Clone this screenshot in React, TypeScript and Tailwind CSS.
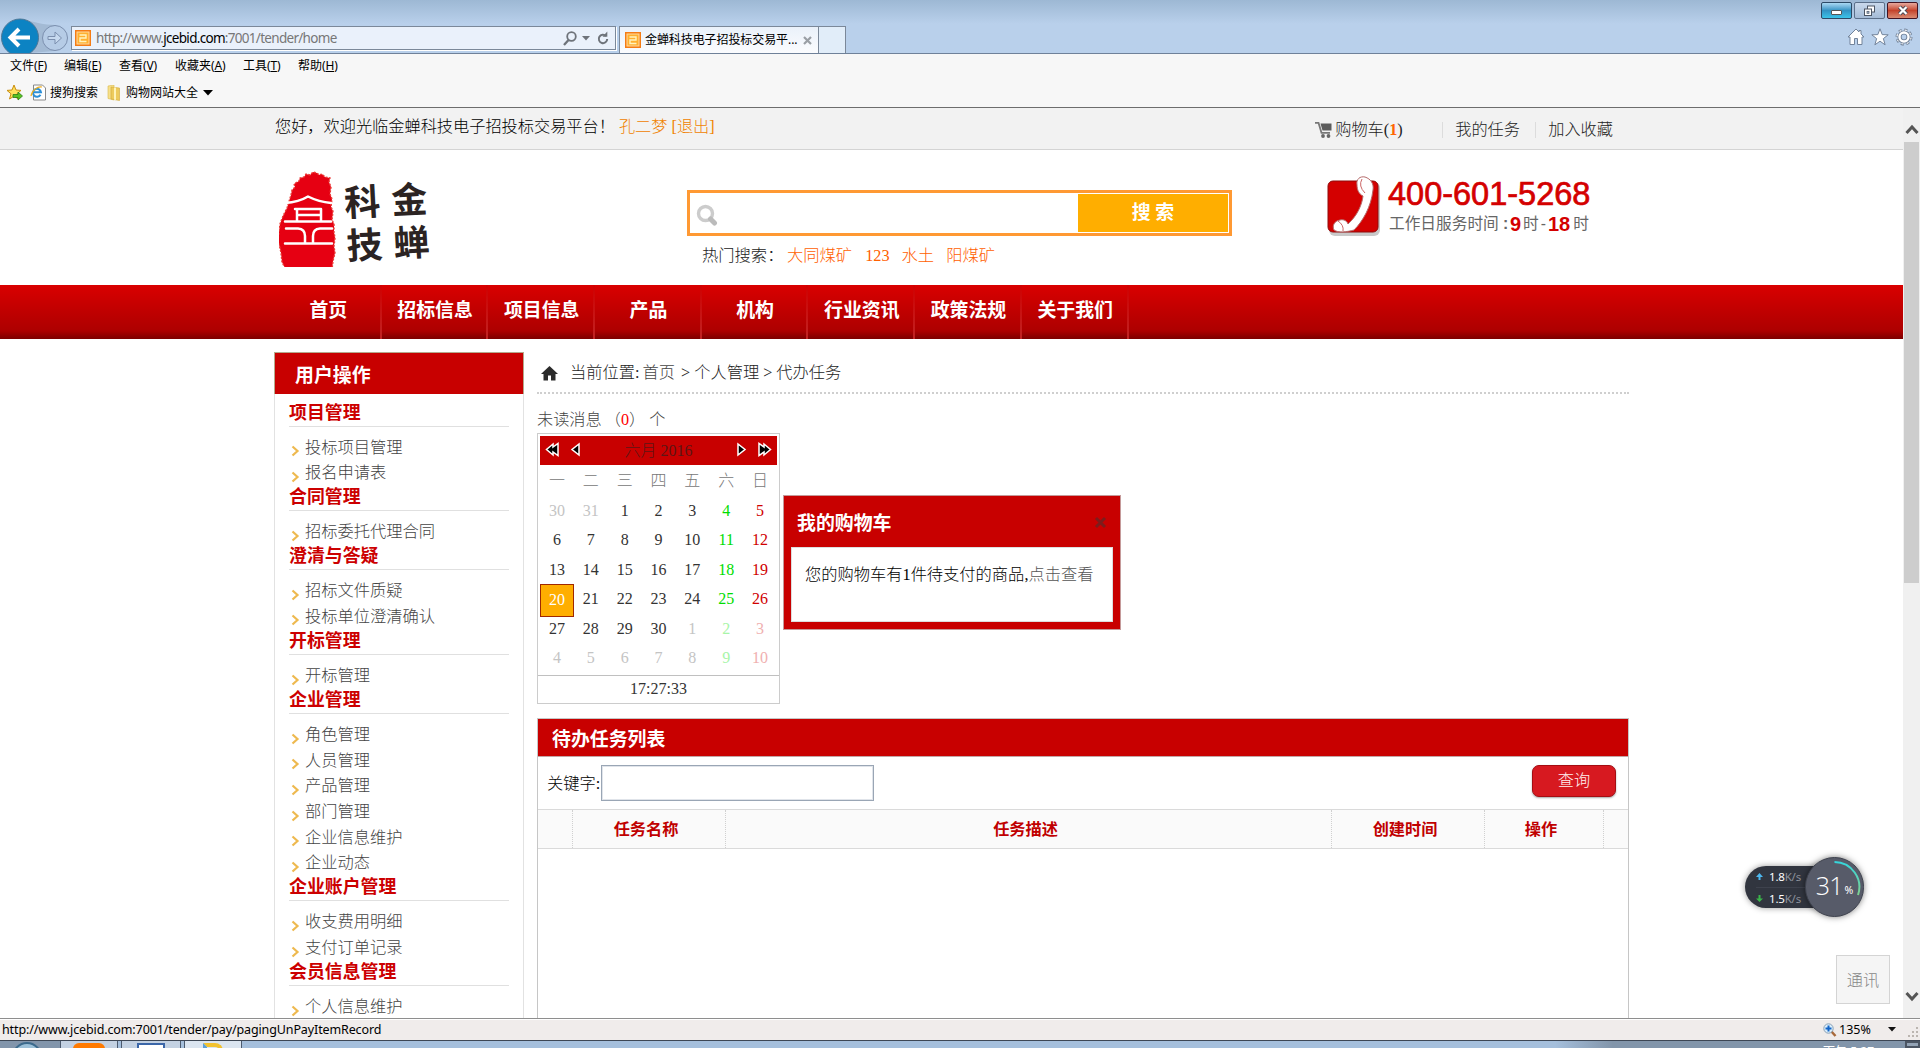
import type { ReactNode } from "react";

const SERIF = "font-['Liberation_Serif','Noto_Sans_CJK_SC',serif]";
const SANS = "font-['Noto_Sans','Noto_Sans_CJK_SC',sans-serif]";

function Favicon() {
  return (
    <svg width="16" height="16" viewBox="0 0 16 16" className="shrink-0">
      <rect width="16" height="16" fill="#f57c14" />
      <rect x="2" y="2" width="12" height="12" fill="#ffb030" stroke="#ffd9a0" strokeWidth="1" />
      <path d="M4.500 5h6.500v3H5v3.500h6.500" fill="none" stroke="#fff3c0" strokeWidth="1.400" />
    </svg>
  );
}

function WindowButtons() {
  return (
    <div className="flex gap-[2px] pr-[2px] pt-[2px]">
      <div className="flex h-[17px] w-[31px] items-end justify-center rounded-[2px] border border-[#2c4a66] bg-linear-to-b from-[#a9d8f3] via-[#3293c4] via-50% to-[#3bc3e8] pb-[3px]">
        <div className="h-[5px] w-[11px] rounded-[1px] border border-[#555] bg-white" />
      </div>
      <div className="flex h-[17px] w-[31px] items-center justify-center rounded-[2px] border border-[#5b6f89] bg-linear-to-b from-[#c9d9ec] to-[#a4bbd6]">
        <svg width="13" height="12" viewBox="0 0 13 12">
          <rect x="4.5" y="1" width="7" height="6" fill="#fff" stroke="#4c5563" />
          <rect x="1.5" y="4" width="7" height="6.5" fill="#fff" stroke="#4c5563" />
          <rect x="4" y="6.3" width="2" height="2" fill="#a4bbd6" stroke="#4c5563" strokeWidth=".7" />
        </svg>
      </div>
      <div className="flex h-[17px] w-[31px] items-center justify-center rounded-[2px] border border-[#431422] bg-linear-to-b from-[#e6a79c] via-[#c4432c] via-50% to-[#d98a72]">
        <svg width="12" height="11" viewBox="0 0 12 11">
          <path d="M2.5 2l7 7M9.5 2l-7 7" stroke="#4a4a55" strokeWidth="4" />
          <path d="M2.5 2l7 7M9.5 2l-7 7" stroke="#fff" strokeWidth="2.2" />
        </svg>
      </div>
    </div>
  );
}

function BrowserChrome() {
  return (
    <div className={`relative flex h-[54px] shrink-0 border-b border-[#6f8199] bg-linear-to-b from-[#9db8d4] to-[#b9d0eb] to-[45%] ${SANS}`}>
      <svg width="71" height="53" viewBox="0 0 71 53" className="shrink-0">
        <path d="M20 19 C36 22 44 25 55 25 L55 51 L30 53Z" fill="#a3bad4" />
        <circle cx="20" cy="37.500" r="18.500" fill="#0c83c3" stroke="#4e7796" />
        <path d="M11 37.500h19M19 29l-8.500 8.500L19 46" fill="none" stroke="#fff" strokeWidth="4" />
        <circle cx="55" cy="38" r="12.500" fill="#b6cce6" stroke="#7b8fae" />
        <path d="M48 36.500h7v-4.500l6.500 6-6.500 6v-4.500h-7z" fill="#c6d9ef" stroke="#7b8fae" />
      </svg>
      <div className="mt-[26px] flex h-[24px] w-[545px] shrink-0 items-center border border-[#7b8899] bg-[#eaf1fb] pl-[3px] pr-[6px] shadow-[1px_1px_0_#fff]">
        <Favicon />
        <div className="ml-[5px] whitespace-nowrap text-[13.500px] leading-[20px] tracking-[-0.700px] text-[#777]">
          http://www.<span className="text-black">jcebid.com</span>:7001/tender/home
        </div>
        <div className="ml-auto flex items-center">
          <svg width="14" height="15" viewBox="0 0 14 15">
            <circle cx="8.500" cy="5.500" r="4.300" fill="none" stroke="#6e737a" strokeWidth="1.800" />
            <path d="M5.500 9L1 14" stroke="#6e737a" strokeWidth="2.300" />
          </svg>
          <svg width="8" height="5" viewBox="0 0 8 5" className="ml-[5px]"><path d="M0 0h8L4 4.500z" fill="#6e737a" /></svg>
          <svg width="12" height="14" viewBox="0 0 12 14" className="ml-[7px]">
            <path d="M9 5A4.200 4.200 0 1 0 10.200 8" fill="none" stroke="#6e737a" strokeWidth="2" />
            <path d="M5.500 5.800h4.800V.5z" fill="#6e737a" />
          </svg>
        </div>
      </div>
      <div className="ml-[3px] mt-[26px] flex h-[27px] w-[200px] shrink-0 items-center border border-b-0 border-[#7b8899] bg-linear-to-b from-[#eaf1fa] to-[#fbfcfe] pl-[5px]">
        <Favicon />
        <span className="ml-[4px] whitespace-nowrap text-[12px] tracking-[-0.080px] text-black">金蝉科技电子招投标交易平...</span>
        <svg width="9" height="9" viewBox="0 0 9 9" className="ml-auto mr-[6px] shrink-0"><path d="M1 1l7 7M8 1L1 8" stroke="#9a9fa5" strokeWidth="2.200" /></svg>
      </div>
      <div className="mt-[26px] h-[27px] w-[27px] shrink-0 border border-b-0 border-l-0 border-[#7b8899] bg-[#e1edf9]" />
      <div className="ml-auto flex flex-col items-end">
        <WindowButtons />
        <div className="mt-[9px] flex gap-[6px] pr-[7px]">
          <svg width="18" height="18" viewBox="0 0 18 18"><path d="M9 1L1 9h2v7.500h4.500v-6h3v6H15V9h2l-3-3V2.500h-2V4z" fill="#fff" stroke="#72839a" /></svg>
          <svg width="18" height="18" viewBox="0 0 18 18"><path d="M9 .8l2.200 5.800 6 .2-4.800 3.800 1.700 6.200L9 13.200l-5.100 3.600 1.700-6.200L.8 6.800l6-.2z" fill="#fff" stroke="#72839a" /></svg>
          <svg width="18" height="18" viewBox="0 0 18 18">
            <circle cx="9" cy="9" r="6.800" fill="none" stroke="#72839a" strokeWidth="3.400" strokeDasharray="3 2.340" />
            <circle cx="9" cy="9" r="6.600" fill="none" stroke="#fff" strokeWidth="2" strokeDasharray="2 3.180" strokeDashoffset="-.5" />
            <circle cx="9" cy="9" r="4.500" fill="none" stroke="#72839a" strokeWidth="4.200" />
            <circle cx="9" cy="9" r="4.500" fill="none" stroke="#fff" strokeWidth="2.400" />
          </svg>
        </div>
      </div>
    </div>
  );
}

function MenuItem({ label, hot, width }: { label: string; hot: string; width: string }) {
  return <div className={`${width} whitespace-nowrap`}>{label}<span className="tracking-[-0.200px]">(<span className="underline">{hot}</span>)</span></div>;
}

function MenuBars() {
  return (
    <div className={`h-[54px] shrink-0 border-b border-[#6d6d6d] bg-[#f7f7f7] text-[12px] text-black ${SANS}`}>
      <div className="flex h-[24px] items-center pl-[10px]">
        <MenuItem label="文件" hot="F" width="w-[54px]" />
        <MenuItem label="编辑" hot="E" width="w-[55px]" />
        <MenuItem label="查看" hot="V" width="w-[56px]" />
        <MenuItem label="收藏夹" hot="A" width="w-[68px]" />
        <MenuItem label="工具" hot="T" width="w-[55px]" />
        <MenuItem label="帮助" hot="H" width="w-[60px]" />
      </div>
      <div className="flex h-[29px] items-center pl-[6px]">
        <svg width="17" height="17" viewBox="0 0 17 17">
          <path d="M8 1l2 5 5 .4-4 3.400 1.500 5.200L8 12.200 3.500 15 5 9.800 1 6.400 6 6z" fill="#ffe15c" stroke="#c98e10" />
          <path d="M7 10.500h5V8l4.500 4-4.500 4v-2.500H7z" fill="#58c322" stroke="#2b7d14" strokeWidth=".8" />
        </svg>
        <svg width="17" height="17" viewBox="0 0 17 17" className="ml-[7px]">
          <path d="M3.500 1h9l3 3v12h-12z" fill="#fff" stroke="#8a8a8a" />
          <path d="M10.500 10.800A4 4 0 1 1 11 8.300H3.500" fill="none" stroke="#2c8fd8" strokeWidth="2" />
          <path d="M1 12C2 6 8 2 12 3" fill="none" stroke="#f0b020" strokeWidth="1.200" />
        </svg>
        <span className="ml-[3px]">搜狗搜索</span>
        <svg width="14" height="16" viewBox="0 0 14 16" className="ml-[9px]">
          <path d="M1 1l6-1v15l-6-1.500z" fill="#f7e08a" stroke="#d9b84a" strokeWidth=".6" />
          <path d="M4 2l8.500 1v12.500L4 14z" fill="#edcb5c" stroke="#d0a838" strokeWidth=".6" />
          <path d="M7 2.400l2 .2v12.500l-2-.4z" fill="#fff3b8" />
        </svg>
        <span className="ml-[5px]">购物网站大全</span>
        <svg width="10" height="6" viewBox="0 0 10 6" className="ml-[5px]"><path d="M0 0h10L5 5.500z" fill="#000" /></svg>
      </div>
    </div>
  );
}

function TopStrip() {
  return (
    <div className="h-[42px] border-b border-[#d4d4d4] bg-[#f2f2f2]">
      <div className="mx-auto flex w-[1355px] text-[16.200px] leading-[24px] text-[#222]">
        <div className="mt-[7px] whitespace-nowrap pl-px text-black">
          您好，欢迎光临金蝉科技电子招投标交易平台！<span className="ml-[4px] text-[#f08200]">孔二梦 <span className="font-normal">[</span>退出<span className="font-normal">]</span></span>
        </div>
        <div className="ml-auto mt-[10px] flex items-center pr-[16px]">
          <svg width="17" height="16" viewBox="0 0 17 16" className="mr-[3px]">
            <path d="M0 .8h3.500l3 10H15" fill="none" stroke="#777" strokeWidth="1.800" />
            <path d="M5.500 1.500H16.500v7H7.500z" fill="#5c5c5c" />
            <circle cx="8" cy="14" r="1.900" fill="#666" /><circle cx="13.500" cy="14" r="1.900" fill="#666" />
          </svg>
          <div className="w-[107px]">购物车<span className="font-normal">(<span className="font-bold text-[#ff6600]">1</span>)</span></div>
          <div className="h-[16px] w-px bg-[#dcdcdc]" />
          <div className="w-[92px] pl-[12px]">我的任务</div>
          <div className="h-[16px] w-px bg-[#dcdcdc]" />
          <div className="pl-[12px]">加入收藏</div>
        </div>
      </div>
    </div>
  );
}

function Logo() {
  return (
    <div className="flex">
      <svg width="60" height="96" viewBox="0 0 60 96">
        <path d="M12 24l1-5 3-3-1-3 5-3 1-3 4-1 2-3 4 1 3-3 4 1 2 2 3-1 3 3 5 1-1 4 2 5-1 7 2 5-1 8 2 4-1 9 2 4 0 8 1 6-1 8 1 7-2 8-1 9-5 3-5 1-4 2-5-1-4 2-5-2-5 1-5-3-5-1-4-4-3-6-1-9-1-5-2-7 1-9 1-8 3-8 4-8z" fill="#e60012" stroke="#ec3a35" strokeWidth="1.400" strokeDasharray="2 1.500" />
        <g fill="none" stroke="#fff" strokeWidth="2.500" strokeLinecap="round" strokeLinejoin="round">
          <path d="M6 32Q20 31 29 25.500Q40 31 52 32" />
          <path d="M16 38h25M20 44h22M18 38v12M42 38v12M6 50.500h46" />
          <path d="M7 57.500h12Q26 58 26 65v7M34 72v-7Q34 58 41 57.500h12M6 72.500h47" />
        </g>
      </svg>
      <div className="ml-[1px] mt-[11px] grid w-[94px] -rotate-3 grid-cols-[47px_47px] text-center text-[36px] font-bold leading-[40px] text-[#2b2322]">
        <span>科</span><span>金</span><span>技</span><span>蝉</span>
      </div>
    </div>
  );
}

function Header() {
  return (
    <div className="mx-auto flex h-[135px] w-[1355px]">
      <div className="w-[413px] pl-[5px] pt-[21px]"><Logo /></div>
      <div className="w-[640px] pt-[40px]">
        <div className="flex h-[46px] w-[545px] justify-between border-[3px] border-[#ff9933] bg-white p-[1px]">
          <svg width="22" height="22" viewBox="0 0 22 22" className="ml-[5px] mt-[10px]">
            <circle cx="9.500" cy="9.500" r="7" fill="none" stroke="#cccccc" strokeWidth="3.400" />
            <path d="M14.500 15l4 4" stroke="#bbb" strokeWidth="5" strokeLinecap="round" />
          </svg>
          <div className="flex w-[150px] items-center justify-center bg-[#ffae00] pt-px text-[18.900px] font-bold text-white">搜 索</div>
        </div>
        <div className="flex pl-[15px] pt-[8px] text-[16.300px] leading-[24px] text-[#ff6000]">
          <span className="w-[85px] whitespace-nowrap text-[#222]">热门搜索：</span>
          <span className="mr-[13px]">大同煤矿</span>
          <span className="mr-[12px] font-normal">123</span>
          <span className="mr-[12px]">水土</span>
          <span>阳煤矿</span>
        </div>
      </div>
      <div className="flex pt-[26px]">
        <svg width="54" height="62" viewBox="0 0 54 62">
          <rect x="2" y="6" width="51" height="54" rx="6" fill="#c9c9c9" />
          <rect x="1" y="5" width="50" height="51" rx="5" fill="#d40000" stroke="#8f0a0a" />
          <path d="M30 9C29 3 33 0 38 1C44 3 47 8 46 14C44 31 36 45 27 54C20 56 11 57 7 54C5 50 7 45 13 44C17 43 20 45 21 48C30 40 35 29 36 20C32 18 30 14 30 9Z" fill="#fff" stroke="#b56b6b" strokeWidth="1" />
          <path d="M35 3Q31 10 38 17M11 45Q17 49 16 55" fill="none" stroke="#c66" strokeWidth="1" />
        </svg>
        <div className="ml-[7px] font-['Liberation_Sans','Noto_Sans_CJK_SC',sans-serif] font-normal">
          <div className="h-[34px] whitespace-nowrap text-[32.500px] leading-[36px] text-[#d40000] [-webkit-text-stroke:0.700px_#d40000]">400-601-5268</div>
          <div className="flex whitespace-nowrap pl-[1px] text-[15.700px] leading-[28px] text-[#666]">
            <span className="w-[114px]">工作日服务时间</span><span className="w-[7px] font-bold">:</span>
            <span className="w-[13px] text-[20px] font-bold text-[#d40000]">9</span><span>时</span><span className="mx-[2px]">-</span>
            <span className="mr-[3px] text-[20px] font-bold text-[#d40000]">18</span><span>时</span>
          </div>
        </div>
      </div>
    </div>
  );
}

const NAV = ["首页", "招标信息", "项目信息", "产品", "机构", "行业资讯", "政策法规", "关于我们"];

function Nav() {
  return (
    <div className="h-[54px] bg-linear-to-b from-[#d90000] via-[#ad0000] via-85% to-[#7d0000]">
      <div className="mx-auto flex h-full w-[1355px] pl-[1px]">
        {NAV.map((n) => (
          <div key={n} className="w-[106.700px] text-center text-[18.900px] font-bold leading-[52px] text-white">
            <div className="h-[54px] border-r-2 pl-[2px] [border-image:linear-gradient(to_bottom,#d00000,#c02424)_1]">{n}</div>
          </div>
        ))}
      </div>
    </div>
  );
}

const MENU: { title: string; items: string[] }[] = [
  { title: "项目管理", items: ["投标项目管理", "报名申请表"] },
  { title: "合同管理", items: ["招标委托代理合同"] },
  { title: "澄清与答疑", items: ["招标文件质疑", "投标单位澄清确认"] },
  { title: "开标管理", items: ["开标管理"] },
  { title: "企业管理", items: ["角色管理", "人员管理", "产品管理", "部门管理", "企业信息维护", "企业动态"] },
  { title: "企业账户管理", items: ["收支费用明细", "支付订单记录"] },
  { title: "会员信息管理", items: ["个人信息维护"] },
];

function Sidebar() {
  return (
    <div className="w-[250px] shrink-0">
      <div className="h-[42px] border border-b-0 border-[#b5a98c] bg-[#c80000] pl-[20px] text-[18.900px] font-bold leading-[45px] text-white">用户操作</div>
      <div className="h-[640px] border-x border-[#e2e2e2] px-[14px] pt-[6.500px]">
        {MENU.map((s) => (
          <div key={s.title}>
            <div className="h-[26px] border-b border-[#e0e0e0] text-[17.900px] font-bold leading-[25.500px] text-[#cc0000]">{s.title}</div>
            <div className="pt-[7.450px]">
              {s.items.map((i) => (
                <div key={i} className="flex h-[25.650px] items-center pt-[1.500px] text-[16.250px] leading-[24px] text-[#444]">
                  <svg width="9" height="12" viewBox="0 0 9 12" className="ml-[2px] mr-[5px] mt-[7px]"><path d="M1.500 1.500L6.500 6l-5 4.500" fill="none" stroke="#eeb94f" strokeWidth="2.200" /></svg>
                  {i}
                </div>
              ))}
            </div>
          </div>
        ))}
      </div>
    </div>
  );
}

function Arrow({ d, w }: { d: string; w: number }) {
  return <svg width={w} height="15" viewBox={`0 0 ${w} 15`} className="mb-[2px]"><path d={d} fill="#000" stroke="#fff" strokeWidth="1.500" /></svg>;
}

const WEEKS = [
  [30, 31, 1, 2, 3, 4, 5],
  [6, 7, 8, 9, 10, 11, 12],
  [13, 14, 15, 16, 17, 18, 19],
  [20, 21, 22, 23, 24, 25, 26],
  [27, 28, 29, 30, 1, 2, 3],
  [4, 5, 6, 7, 8, 9, 10],
];

function dayClass(row: number, col: number, day: number) {
  const outside = (row === 0 && day > 20) || (row > 3 && day < 20);
  if (row === 3 && col === 0) return "border border-[#a02800] bg-[#ffae00] text-white";
  if (col === 5) return outside ? "text-[#a8f5a8]" : "text-[#00dd00]";
  if (col === 6) return outside ? "text-[#f0b0b0]" : "text-[#d00000]";
  return outside ? "text-[#c4c4c4]" : "text-[#333]";
}

function Calendar() {
  return (
    <div className="h-[271px] w-[243px] border border-[#cccccc] text-[16px]">
      <div className="h-[242px] border-b border-[#c0c0c0] p-[2px]">
        <div className="flex h-[29px] items-center bg-[#c80000] pl-[5px] pr-[5px]">
          <Arrow w={16} d="M8 2v3l5-3.500v12L8 10v3L1.500 7.500z" />
          <div className="ml-[9px] flex"><Arrow w={11} d="M9 2v11L2 7.500z" /></div>
          <div className="flex-1 text-center text-[#5c1616]">六月 2016</div>
          <Arrow w={11} d="M2 2v11L9 7.500z" />
          <div className="ml-[9px] flex"><Arrow w={16} d="M8 2v3L3 1.500v12L8 10v3l6.500-5.500z" /></div>
        </div>
        <div className="grid h-[31px] grid-cols-7 text-center leading-[32px] text-[#777]">
          {["一", "二", "三", "四", "五", "六", "日"].map((d) => <span key={d}>{d}</span>)}
        </div>
        {WEEKS.map((w, r) => (
          <div key={r} className="grid h-[29.400px] grid-cols-7 text-center leading-[30.500px]">
            {w.map((d, c) => <span key={c} className={dayClass(r, c, d)}>{d}</span>)}
          </div>
        ))}
      </div>
      <div className="text-center leading-[26px] text-[#333]">17:27:33</div>
    </div>
  );
}

function HeadCell({ w, children }: { w: string; children?: ReactNode }) {
  return <div className={`${w} shrink-0 border-r border-dotted border-[#d0d0d0] text-center`}>{children}</div>;
}

function TaskPanel() {
  return (
    <div className="mt-[14px] h-[320px] border border-[#c6c6c6]">
      <div className="h-[38px] border-b border-[#c3a5a5] bg-[#c80000] pl-[14px] text-[18.900px] font-bold leading-[41px] text-white">待办任务列表</div>
      <div className="flex h-[52px] items-start pl-[9px] pr-[12px] pt-[8px]">
        <span className="w-[54px] whitespace-nowrap text-[16.300px] leading-[38px] text-black">关键字<span className="font-normal">:</span></span>
        <div className="h-[36px] w-[273px] border border-[#9aa6b5] bg-white shadow-[inset_0_0_0_1px_#e0e4ea]" />
        <div className="ml-auto h-[32px] w-[84px] rounded-[7px] border border-[#a50d12] bg-[#d71920] text-center text-[16.200px] leading-[31px] text-[#fff0f0] shadow-[0_1px_2px_rgba(0,0,0,0.350)]">查询</div>
      </div>
      <div className="flex h-[40px] border-y border-[#dadada] bg-[#fafafa] text-[16.200px] font-bold leading-[41px] text-[#c00000]">
        <HeadCell w="w-[35px]" />
        <HeadCell w="w-[153px]"><span className="mr-[6px]">任务名称</span></HeadCell>
        <HeadCell w="w-[606px]"><span className="mr-[6px]">任务描述</span></HeadCell>
        <HeadCell w="w-[153px]"><span className="mr-[6px]">创建时间</span></HeadCell>
        <HeadCell w="w-[119px]"><span className="mr-[6px]">操作</span></HeadCell>
      </div>
    </div>
  );
}

function CartPopup() {
  return (
    <div className="absolute left-[783px] top-[387px] h-[135px] w-[338px] border border-[#c59a9a] bg-[#c80000] px-[7px]">
      <div className="flex h-[51px] items-center justify-between pl-[6px] pr-[6px] pt-[5px] text-[18.900px] font-bold text-white">
        我的购物车
        <svg width="13" height="13" viewBox="0 0 13 13" className="mb-[3px]"><path d="M2 2l9 9M11 2l-9 9" stroke="#7c1c1c" strokeWidth="3" /></svg>
      </div>
      <div className="h-[75px] border border-[#ddd] bg-white pl-[13px] pt-[15px] text-[16.250px] leading-[24px] text-black">
        <div className="whitespace-nowrap">您的购物车有<span className="font-normal">1</span>件待支付的商品<span className="font-normal">,</span><span className="text-[#555]">点击查看</span></div>
      </div>
    </div>
  );
}

function NetMeter() {
  return (
    <div className={`absolute left-[1745px] top-[749px] flex h-[60px] w-[119px] items-center font-normal text-white ${SANS}`}>
      <div className="flex h-[42px] w-[100px] flex-col rounded-l-[21px] bg-[#31353f] pl-[11px] text-[11.500px] leading-[21px] tracking-[-0.200px] shadow-[0_0_6px_rgba(0,0,0,0.400)]">
        <div className="flex items-center border-b border-[#3e424d]"><svg width="7" height="8" viewBox="0 0 7 8" className="mr-[6px]"><path d="M3.500 0L7 4H4.500v3h-2V4H0z" fill="#4db8f0" /></svg>1.8<span className="text-[#8d919b]">K/s</span></div>
        <div className="flex items-center"><svg width="7" height="8" viewBox="0 0 7 8" className="mr-[6px]"><path d="M3.500 7L0 3.500h2.500V0h2v3.500H7z" fill="#3ab54a" /></svg>1.5<span className="text-[#8d919b]">K/s</span></div>
      </div>
      <div className="absolute right-0 top-0 flex h-[60px] w-[59px] items-center justify-center rounded-full border border-[#3e424e] bg-[#575b69] pb-[2px] shadow-[0_0_6px_rgba(0,0,0,0.500)]">
        <svg width="57" height="58" viewBox="0 0 57 58" className="absolute left-0 top-0">
          <defs><linearGradient id="arc" x1="0" y1="0" x2="0" y2="1"><stop stopColor="#35d6dc" /><stop offset="1" stopColor="#7fd08f" /></linearGradient></defs>
          <path d="M28.500 4A25 25 0 0 1 52 37" fill="none" stroke="url(#arc)" strokeWidth="2" />
        </svg>
        <span className="font-['Open_Sans'] text-[25px] font-light tracking-[-1px]">31</span><span className="ml-[2px] mt-[10px] text-[10.500px]">%</span>
      </div>
    </div>
  );
}

function ScrollBar() {
  return (
    <div className="flex w-[17px] shrink-0 flex-col items-center bg-[#f0f0f0]">
      <svg width="17" height="34" viewBox="0 0 17 34"><path d="M3.500 25l5.500-6 5.500 6" fill="none" stroke="#555" strokeWidth="3" /></svg>
      <div className="h-[441px] w-[15px] bg-[#cdcdcd]" />
      <svg width="17" height="34" viewBox="0 0 17 34" className="mb-[1px] mt-auto"><path d="M3.500 10l5.500 6 5.500-6" fill="none" stroke="#555" strokeWidth="3" /></svg>
    </div>
  );
}

function StatusBar() {
  return (
    <div className={`flex h-[22px] shrink-0 items-center border-t border-[#8e8e8e] bg-[#f0eceb] pl-[2px] text-[12.500px] leading-[20px] text-black shadow-[inset_0_1px_0_#fff] ${SANS}`}>
      <span className="tracking-[-0.120px]">http://www.jcebid.com:7001/tender/pay/pagingUnPayItemRecord</span>
      <svg width="14" height="14" viewBox="0 0 14 14" className="ml-auto">
        <path d="M8 8l4.500 5" stroke="#a8693a" strokeWidth="2.500" />
        <circle cx="5.500" cy="5.500" r="4.700" fill="#d9edfb" stroke="#8aa0b4" />
        <path d="M5.500 2.500v6M2.500 5.500h6" stroke="#1264c8" strokeWidth="2" />
      </svg>
      <span className="ml-[2px] w-[49px] text-[12.500px]">135%</span>
      <svg width="8" height="5" viewBox="0 0 8 5"><path d="M0 0h8L4 4.500z" fill="#111" /></svg>
      <svg width="12" height="12" viewBox="0 0 12 12" className="ml-[12px] mt-[7px]">
        {[[8, 0], [4, 4], [8, 4], [0, 8], [4, 8], [8, 8]].map(([x, y]) => <rect key={`${x}-${y}`} x={x} y={y} width="2" height="2" fill="#bbb5b0" />)}
      </svg>
    </div>
  );
}

function TaskBar() {
  return (
    <div className={`flex h-[8px] shrink-0 overflow-hidden border-t border-[#3d4654] bg-linear-to-r from-[#a5bfdc] from-[81%] to-[#8295aa] to-[84%] ${SANS}`}>
      <div className="flex w-[60px] justify-center bg-[#8295ab] pr-[6px] pt-[1px]"><div className="h-[30px] w-[30px] rounded-full border-2 border-[#3c6a8c] bg-[#9cc0d8]" /></div>
      <div className="mr-[3px] flex w-[58px] justify-center border-x border-[#4b5a6e] bg-[#c3d1e2] pt-[2px]"><div className="h-[12px] w-[32px] rounded-t-[6px] bg-[#ff7a00]" /></div>
      <div className="mr-[3px] flex w-[60px] justify-center border-x border-[#4b5a6e] bg-[#c3d1e2] pt-[2px]"><div className="h-[12px] w-[28px] border-2 border-[#3b66a8] bg-white" /></div>
      <div className="flex w-[58px] justify-center border-x border-[#4b5a6e] bg-[#dbe5f0] pt-[2px]"><div className="h-[12px] w-[20px] rounded-tr-[8px] border-4 border-l-[#5aa0d8] border-t-[#f2c230] border-r-[#f2c230]" /></div>
      <div className="ml-auto mr-[31px] pt-[3px] text-[12px] leading-[16px] text-white">下午 5:27</div>
      <div className="w-[15px] border-2 border-[#4b5563] bg-[#93a3b5]" />
    </div>
  );
}

export default function App() {
  return (
    <div className={`flex h-[1048px] w-[1920px] flex-col overflow-hidden bg-white ${SERIF}`}>
      <BrowserChrome />
      <MenuBars />
      <div className="relative flex h-[910px] shrink-0 overflow-hidden font-light">
        <div className="w-[1903px] shrink-0">
          <TopStrip />
          <Header />
          <Nav />
          <div className="mx-auto flex w-[1355px] gap-[13px] pt-[13px]">
            <Sidebar />
            <div className="w-[1092px]">
              <div className="flex h-[42px] items-center whitespace-nowrap border-b-2 border-dotted border-[#cfcfcf] pl-[3px] pt-[2px] text-[16.250px] text-[#222]">
                <svg width="19" height="17" viewBox="0 0 19 17"><path d="M9.500 1L1 9h2.500v6.500h4.500v-5h3v5h4.500V9H18z" fill="#2b2b2b" /></svg>
                <span className="ml-[11px]">当前位置<span className="font-normal">:</span></span>
                <span className="ml-[3px] text-[#444]">首页</span>
                <span className="ml-[6px] font-normal">&gt;</span>
                <span className="ml-[4px]">个人管理</span>
                <span className="ml-[4px] font-normal">&gt;</span>
                <span className="ml-[4px]">代办任务</span>
              </div>
              <div className="h-[39px] pt-[14px] text-[16.200px] leading-[24px] text-[#444]">未读消息<span className="ml-[3px]">（</span><span className="font-normal text-[#ff0000]">0</span>）<span className="ml-[4px]">个</span></div>
              <Calendar />
              <TaskPanel />
            </div>
          </div>
        </div>
        <ScrollBar />
        <CartPopup />
        <NetMeter />
        <div className="absolute left-[1836px] top-[847px] h-[49px] w-[54px] border border-[#d4d4d4] bg-[#f5f5f5] text-center text-[16.200px] leading-[50px] text-[#888]">通讯</div>
      </div>
      <StatusBar />
      <TaskBar />
    </div>
  );
}
